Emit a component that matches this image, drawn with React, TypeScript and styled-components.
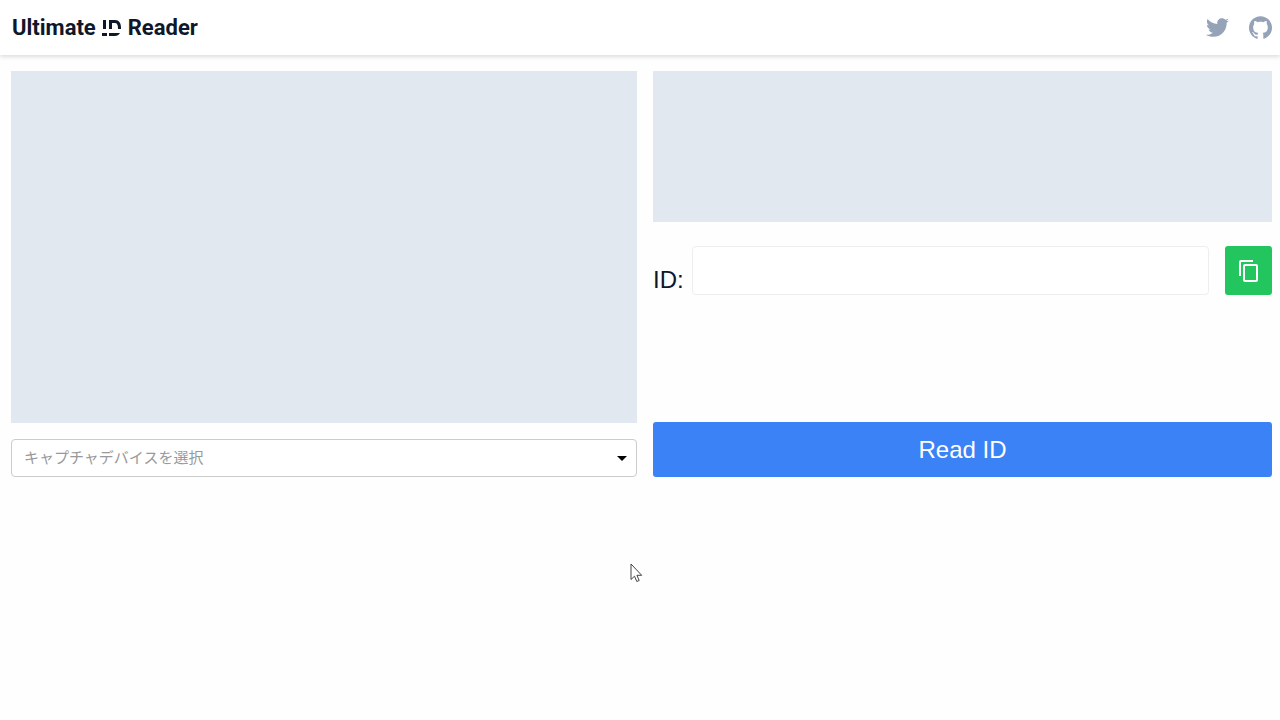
import React, { useState } from "react";
import styled, { createGlobalStyle } from "styled-components";
import { FaTwitter } from "react-icons/fa";
import { SiGithub } from "react-icons/si";
import { MdContentCopy } from "react-icons/md";

const GlobalStyle = createGlobalStyle`
  *, *::before, *::after { box-sizing: border-box; }
  body {
    margin: 0;
    background: #fefefe;
    color: #0f172a;
    font-family: "Liberation Sans", "Noto Sans CJK JP", sans-serif;
  }
`;

const Header = styled.header`
  display: flex;
  align-items: center;
  justify-content: space-between;
  height: 55px;
  padding: 0 8px 0 12px;
  background: #fff;
  box-shadow: 0 2px 4px rgba(0, 0, 0, 0.13);
`;

const Title = styled.h1`
  display: flex;
  align-items: center;
  gap: 6px;
  margin: 0;
  font: 700 22px/24px Roboto, sans-serif;
`;

const Links = styled.nav`
  display: flex;
  gap: 20px;
`;

const IconLink = styled.a`
  display: flex;
  color: #94a3b8;
`;

const Main = styled.main`
  display: grid;
  grid-template-columns: 626fr 619fr;
  gap: 16px;
  padding: 16px 8px 16px 11px;
`;

const Column = styled.section`
  display: flex;
  flex-direction: column;
`;

const Capture = styled.div`
  aspect-ratio: 16 / 9;
  margin-bottom: 16px;
  background: #e2e8f0;
`;

const Preview = styled.div`
  height: 151px;
  margin-bottom: 24px;
  background: #e2e8f0;
`;

const SelectWrap = styled.div`
  display: grid;
  align-items: center;

  > * { grid-area: 1 / 1; }
  > svg {
    justify-self: end;
    margin-right: 10px;
    pointer-events: none;
  }
`;

const DeviceSelect = styled.select`
  appearance: none;
  width: 100%;
  height: 38px;
  padding: 0 32px 2px 12px;
  border: 1px solid #ccc;
  border-radius: 4px;
  background: #fff;
  color: #999;
  font: 400 15px "Liberation Sans", "Noto Sans CJK JP", sans-serif;
`;

const IdRow = styled.div`
  display: flex;
  align-items: stretch;
  height: 49px;
`;

const IdLabel = styled.label`
  align-self: flex-end;
  margin-right: 8px;
  font-size: 24px;
  line-height: 30px;
`;

const IdInput = styled.input`
  flex: 1;
  min-width: 0;
  margin-right: 16px;
  padding: 0 12px;
  border: 1px solid #eee;
  border-radius: 4px;
  background: #fff;
  font: 24px "Liberation Sans", sans-serif;
`;

const Button = styled.button<{ $color: string }>`
  display: flex;
  align-items: center;
  justify-content: center;
  border: 0;
  border-radius: 3px;
  background: ${({ $color }) => $color};
  color: #fff;
`;

const CopyButton = styled(Button)`
  width: 47px;
  padding: 0;
`;

const ReadButton = styled(Button)`
  height: 55px;
  margin-top: auto;
  font: 24px "Liberation Sans", sans-serif;
`;

const Cursor = styled.svg`
  position: absolute;
  left: 630px;
  top: 563px;
`;

const IdMark = () => (
  <svg width="20" height="16" viewBox="0 0 20 16" role="img" aria-label="ID" fill="#0f172a">
    <path d="M1 0h3v9H1zM0 13h5v3H0z" />
    <path d="M7 0h6c4 0 6 3 6 8v1h-3V8c0-3-1-5-3-5h-3v6H7zM7 13h11c-1 2-3 3-5 3H7z" />
  </svg>
);

export default function App() {
  const [id, setId] = useState("");
  return (
    <>
      <GlobalStyle />
      <Header>
        <Title>
          <span>Ultimate</span>
          <IdMark />
          <span>Reader</span>
        </Title>
        <Links>
          <IconLink href="#twitter" aria-label="Twitter"><FaTwitter size={23} /></IconLink>
          <IconLink href="#github" aria-label="GitHub"><SiGithub size={23} /></IconLink>
        </Links>
      </Header>
      <Main>
        <Column>
          <Capture />
          <SelectWrap>
            <DeviceSelect aria-label="キャプチャデバイスを選択" defaultValue="">
              <option value="">キャプチャデバイスを選択</option>
            </DeviceSelect>
            <svg width="10" height="5" viewBox="0 0 10 5"><path d="M0 0h10L5 5z" /></svg>
          </SelectWrap>
        </Column>
        <Column>
          <Preview />
          <IdRow>
            <IdLabel htmlFor="reader-id">ID:</IdLabel>
            <IdInput id="reader-id" value={id} onChange={(e) => setId(e.target.value)} />
            <CopyButton
              type="button"
              $color="#22c55e"
              aria-label="Copy ID"
              onClick={() => navigator.clipboard?.writeText(id)}
            >
              <MdContentCopy size={24} />
            </CopyButton>
          </IdRow>
          <ReadButton type="button" $color="#3b82f6">Read ID</ReadButton>
        </Column>
      </Main>
      <Cursor width="13" height="20" viewBox="0 0 13 20" aria-hidden="true">
        <path
          d="M1 1v15.500l3.500-3.300 2.300 5.300 2.400-1-2.300-5.200h4.800z"
          fill="#fff"
          stroke="#444"
        />
      </Cursor>
    </>
  );
}
